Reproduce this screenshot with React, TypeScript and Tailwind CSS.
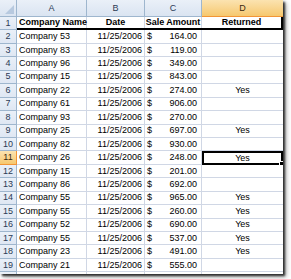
import React from 'react';

type Row = { name: string; amount: string; returned?: boolean };

const ROWS: Row[] = [
  { name: 'Company 53', amount: '164.00' },
  { name: 'Company 83', amount: '119.00' },
  { name: 'Company 96', amount: '349.00' },
  { name: 'Company 15', amount: '843.00' },
  { name: 'Company 22', amount: '274.00', returned: true },
  { name: 'Company 61', amount: '906.00' },
  { name: 'Company 93', amount: '270.00' },
  { name: 'Company 25', amount: '697.00', returned: true },
  { name: 'Company 82', amount: '930.00' },
  { name: 'Company 26', amount: '248.00', returned: true },
  { name: 'Company 15', amount: '201.00' },
  { name: 'Company 86', amount: '692.00' },
  { name: 'Company 55', amount: '965.00', returned: true },
  { name: 'Company 55', amount: '260.00', returned: true },
  { name: 'Company 52', amount: '690.00', returned: true },
  { name: 'Company 55', amount: '537.00', returned: true },
  { name: 'Company 23', amount: '491.00', returned: true },
  { name: 'Company 21', amount: '555.00' },
];

const SELECTED_ROW = 11;

const cellBase = 'h-full flex items-center whitespace-nowrap border-r border-b border-[#d0d7e5] shrink-0';

function RowHeader({ n }: { n?: number }) {
  const active = n === SELECTED_ROW;
  return (
    <div
      className={`w-[17px] h-full shrink-0 flex items-center justify-center border-r border-b ${
        active
          ? 'bg-gradient-to-b from-[#fbe3b0] to-[#f6c86e] border-[#f29536] text-[#3a2a10]'
          : 'bg-gradient-to-b from-[#eaf0f8] to-[#dfe7f3] border-[#9eb6ce] text-[#2b3a55]'
      }`}
    >
      {n}
    </div>
  );
}

export default function App() {
  return (
    <div className="w-[291px] h-[279px] bg-white overflow-hidden">
      <div
        className="w-[283px] h-[274px] overflow-hidden bg-white text-black text-[9px] leading-none shadow-[2px_2px_2px_rgba(0,0,0,0.75),3px_3px_5px_rgba(0,0,0,0.35)]"
        style={{ fontFamily: '"Liberation Sans", Arial, sans-serif' }}
      >
        {/* column letters */}
        <div className="flex h-[17px]">
          <div className="w-[17px] h-full shrink-0 relative bg-gradient-to-b from-[#eaf0f8] to-[#dae4f1] border-r border-b border-[#9eb6ce]">
            <svg className="absolute right-[2px] bottom-[2px]" width="9" height="9" viewBox="0 0 9 9">
              <polygon points="9,0 9,9 0,9" fill="#b7c9df" />
            </svg>
          </div>
          {[
            ['A', 'w-[70px]'],
            ['B', 'w-[58px]'],
            ['C', 'w-[57px]'],
          ].map(([l, w]) => (
            <div
              key={l}
              className={`${w} h-full shrink-0 flex items-center justify-center bg-gradient-to-b from-[#eaf0f8] to-[#dae4f1] border-r border-b border-[#9eb6ce] text-[#2b3a55]`}
            >
              {l}
            </div>
          ))}
          <div className="w-[81px] h-full shrink-0 flex items-center justify-center bg-gradient-to-b from-[#fbe3b0] to-[#f6c86e] border-b border-[#f29536] text-[#3a2a10]">
            D
          </div>
        </div>

        {/* header row 1 */}
        <div className="flex h-[13.45px]">
          <RowHeader n={1} />
          <div className="flex h-full border-b-2 border-black">
            <div className={`${cellBase} w-[70px] pl-[2px] font-bold !border-b-0`}>Company Name</div>
            <div className={`${cellBase} w-[58px] justify-center font-bold !border-b-0`}>Date</div>
            <div className={`${cellBase} w-[57px] justify-center font-bold !border-b-0`}>Sale Amount</div>
            <div className="w-[81px] h-full shrink-0 flex items-center justify-center whitespace-nowrap font-bold border-r-2 border-black">
              Returned
            </div>
          </div>
        </div>

        {ROWS.map((r, i) => {
          const n = i + 2;
          const sel = n === SELECTED_ROW;
          return (
            <div key={n} className="flex h-[13.45px]">
              <RowHeader n={n} />
              <div className={`${cellBase} w-[70px] pl-[2px]`}>{r.name}</div>
              <div className={`${cellBase} w-[58px] justify-end pr-[2px]`}>11/25/2006</div>
              <div className={`${cellBase} w-[57px] justify-between pl-[2px] pr-[4px]`}>
                <span>$</span>
                <span>{r.amount}</span>
              </div>
              <div
                className={`w-[81px] h-full shrink-0 flex items-center justify-center relative ${
                  sel ? 'border-2 border-black' : 'border-b border-[#d0d7e5]'
                }`}
              >
                {r.returned ? 'Yes' : ''}
                {sel && <span className="absolute -right-[3px] -bottom-[3px] w-[5px] h-[5px] bg-black border border-white" />}
              </div>
            </div>
          );
        })}

        {/* partial row 20 */}
        <div className="flex h-[13.45px]">
          <RowHeader />
          <div className={`${cellBase} w-[70px]`} />
          <div className={`${cellBase} w-[58px]`} />
          <div className={`${cellBase} w-[57px]`} />
          <div className="w-[81px] h-full shrink-0 border-b border-[#d0d7e5]" />
        </div>
      </div>
    </div>
  );
}
